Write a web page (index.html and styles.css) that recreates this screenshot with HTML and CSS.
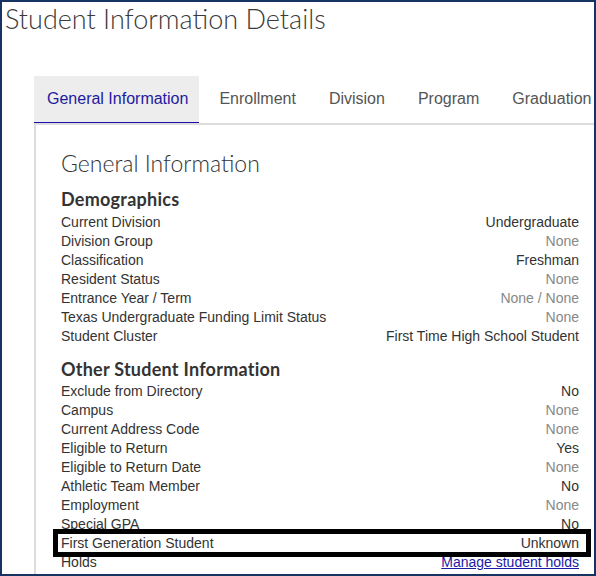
FILE: index.html
```html
<!DOCTYPE html>
<html lang="en">
<head>
<meta charset="utf-8">
<title>Student Information Details</title>
<link rel="stylesheet" href="styles.css">
</head>
<body>
<div class="frame">
  <h1 class="page-title">Student Information Details</h1>
  <ul class="tabs">
    <li class="tab active">General Information</li>
    <li class="tab">Enrollment</li>
    <li class="tab">Division</li>
    <li class="tab">Program</li>
    <li class="tab">Graduation</li>
  </ul>
  <div class="panel">
    <h2 class="panel-title">General Information</h2>
    <section class="group">
      <h3 class="group-title">Demographics</h3>
      <div class="row"><span>Current Division</span><span class="val">Undergraduate</span></div>
      <div class="row"><span>Division Group</span><span class="val none">None</span></div>
      <div class="row"><span>Classification</span><span class="val">Freshman</span></div>
      <div class="row"><span>Resident Status</span><span class="val none">None</span></div>
      <div class="row"><span>Entrance Year / Term</span><span class="val none">None / None</span></div>
      <div class="row"><span>Texas Undergraduate Funding Limit Status</span><span class="val none">None</span></div>
      <div class="row"><span>Student Cluster</span><span class="val">First Time High School Student</span></div>
    </section>
    <section class="group second">
      <h3 class="group-title">Other Student Information</h3>
      <div class="row"><span>Exclude from Directory</span><span class="val">No</span></div>
      <div class="row"><span>Campus</span><span class="val none">None</span></div>
      <div class="row"><span>Current Address Code</span><span class="val none">None</span></div>
      <div class="row"><span>Eligible to Return</span><span class="val">Yes</span></div>
      <div class="row"><span>Eligible to Return Date</span><span class="val none">None</span></div>
      <div class="row"><span>Athletic Team Member</span><span class="val">No</span></div>
      <div class="row"><span>Employment</span><span class="val none">None</span></div>
      <div class="row"><span>Special GPA</span><span class="val">No</span></div>
      <div class="row highlight"><span>First Generation Student</span><span class="val">Unknown</span></div>
      <div class="row"><span>Holds</span><a class="val link" href="#">Manage student holds</a></div>
    </section>
  </div>
</div>
</body>
</html>
```
FILE: styles.css
```css
html, body {
  margin: 0;
  padding: 0;
  background: #fff;
}

.frame {
  width: 596px;
  height: 576px;
  box-sizing: border-box;
  border: 2px solid #163463;
  overflow: hidden;
  background: #fff;
}

.page-title {
  margin: 0;
  padding-left: 3px;
  font-family: Lato, "Open Sans", sans-serif;
  font-weight: 300;
  font-size: 27px;
  line-height: 34px;
  color: #3a3a3a;
  white-space: nowrap;
}

.tabs {
  list-style: none;
  margin: 40px 0 0 32px;
  padding: 0;
  display: flex;
  gap: 7px;
  border-bottom: 2px solid #ddd;
  overflow: hidden;
}

.tab {
  flex-shrink: 0;
  height: 46px;
  line-height: 46px;
  padding: 0 13px;
  margin-bottom: -2px;
  border-bottom: 3px solid transparent;
  font-family: "Liberation Sans", Arial, sans-serif;
  font-size: 16px;
  color: #555;
  white-space: nowrap;
}

.tab.active {
  background: #ededed;
  color: #1d1aa0;
  border-bottom-color: #1a0ca8;
  padding-right: 11px;
}

.panel {
  margin-left: 32px;
  border-left: 2px solid #ddd;
  padding: 24px 15px 0 25px;
  height: 460px;
}

.panel-title {
  margin: 0 0 11px;
  font-family: Lato, "Open Sans", sans-serif;
  font-weight: 300;
  font-size: 23px;
  line-height: 28px;
  color: #333;
}

.group-title {
  margin: 0 0 2.5px;
  font-family: Lato, "Open Sans", sans-serif;
  font-weight: 700;
  font-size: 18px;
  line-height: 22px;
  letter-spacing: 0.25px;
  color: #333;
}

.group.second {
  margin-top: 12px;
}

.row {
  display: flex;
  justify-content: space-between;
  font-family: "Liberation Sans", Arial, sans-serif;
  font-size: 14px;
  line-height: 19px;
  color: #333;
  white-space: nowrap;
}

.val {
  text-align: right;
}

.val.none {
  color: #888;
}

.val.link {
  color: #1d1aa6;
  text-decoration: underline;
}

.row.highlight {
  position: relative;
}

.row.highlight::after {
  content: "";
  position: absolute;
  top: -5px;
  bottom: -4px;
  left: -8px;
  right: -12px;
  border: 5px solid #000;
  pointer-events: none;
}
```
